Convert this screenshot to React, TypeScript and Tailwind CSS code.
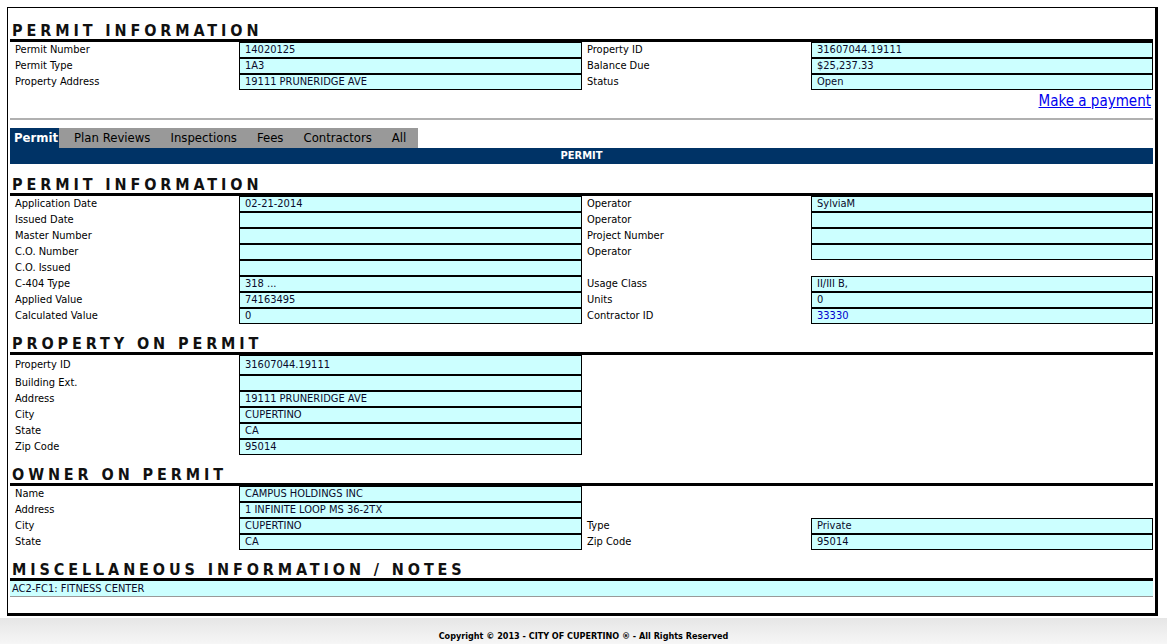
import React from "react";

const FONT = '"DejaVu Sans Condensed", "Liberation Sans", sans-serif';

type Cell = { label?: string; value?: string; cyan?: boolean; link?: boolean };

function Heading({ text, h }: { text: string; h: string }) {
  return (
    <div className={`${h} flex items-end border-b-[3px] border-black pl-[2px]`}>
      <span className="text-[16px] font-bold tracking-[3.9px] leading-[16px] text-[#111]">{text}</span>
    </div>
  );
}

function Row({ left, right, h = "h-[16px]" }: { left: Cell; right?: Cell; h?: string }) {
  const val = (c: Cell | undefined) =>
    c && c.cyan ? (
      <div className="border border-black bg-[#ccffff] pl-[5px] flex items-center overflow-hidden whitespace-nowrap">
        <span className={c.link ? "text-[#0000cc]" : "text-[#0a0a2a]"}>{c.value}</span>
      </div>
    ) : (
      <div />
    );
  return (
    <div className={`grid grid-cols-[229px_343px_229px_342px] ${h} text-[11px] leading-[14px]`}>
      <div className="pl-[5px] flex items-center text-black">{left.label}</div>
      {val(left)}
      <div className="pl-[5px] flex items-center text-black">{right?.label}</div>
      {val(right)}
    </div>
  );
}

export default function App() {
  return (
    <div className="min-h-[644px] w-[1167px] bg-white flex flex-col" style={{ fontFamily: FONT }}>
      <div className="ml-[7px] mt-[7px] w-[1151px] h-[609px] border-l border-t border-r-[3px] border-b-[3px] border-black px-[2px]">
        <Heading text="PERMIT INFORMATION" h="h-[34px]" />
        <Row left={{ label: "Permit Number", value: "14020125", cyan: true }} right={{ label: "Property ID", value: "31607044.19111", cyan: true }} />
        <Row left={{ label: "Permit Type", value: "1A3", cyan: true }} right={{ label: "Balance Due", value: "$25,237.33", cyan: true }} />
        <Row left={{ label: "Property Address", value: "19111 PRUNERIDGE AVE", cyan: true }} right={{ label: "Status", value: "Open", cyan: true }} />
        <div className="flex justify-end pr-[2px] pt-[2px] h-[22px]">
          <a href="#" className="text-[15px] leading-[18px] text-[#0000ee] underline">Make a payment</a>
        </div>
        <div className="mt-[6px] h-[2px] border-t-2 border-[#b0b0b0]" />
        <div className="mt-[8px] flex h-[20px] text-[13px] leading-[20px]">
          <div className="bg-[#003366] text-white font-bold pl-[4px] pr-[1px]">Permit</div>
          <div className="bg-[#999999] text-black flex gap-[20px] pl-[15px] pr-[12px]">
            <span>Plan Reviews</span>
            <span>Inspections</span>
            <span>Fees</span>
            <span>Contractors</span>
            <span>All</span>
          </div>
        </div>
        <div className="h-[16px] bg-[#003366] text-white font-bold text-[11px] leading-[16px] text-center">PERMIT</div>
        <Heading text="PERMIT INFORMATION" h="h-[32px]" />
        <Row left={{ label: "Application Date", value: "02-21-2014", cyan: true }} right={{ label: "Operator", value: "SylviaM", cyan: true }} />
        <Row left={{ label: "Issued Date", value: "", cyan: true }} right={{ label: "Operator", value: "", cyan: true }} />
        <Row left={{ label: "Master Number", value: "", cyan: true }} right={{ label: "Project Number", value: "", cyan: true }} />
        <Row left={{ label: "C.O. Number", value: "", cyan: true }} right={{ label: "Operator", value: "", cyan: true }} />
        <Row left={{ label: "C.O. Issued", value: "", cyan: true }} />
        <Row left={{ label: "C-404 Type", value: "318 ...", cyan: true }} right={{ label: "Usage Class", value: "II/III B,", cyan: true }} />
        <Row left={{ label: "Applied Value", value: "74163495", cyan: true }} right={{ label: "Units", value: "0", cyan: true }} />
        <Row left={{ label: "Calculated Value", value: "0", cyan: true }} right={{ label: "Contractor ID", value: "33330", cyan: true, link: true }} />
        <Heading text="PROPERTY ON PERMIT" h="h-[31px]" />
        <Row h="h-[20px]" left={{ label: "Property ID", value: "31607044.19111", cyan: true }} />
        <Row left={{ label: "Building Ext.", value: "", cyan: true }} />
        <Row left={{ label: "Address", value: "19111 PRUNERIDGE AVE", cyan: true }} />
        <Row left={{ label: "City", value: "CUPERTINO", cyan: true }} />
        <Row left={{ label: "State", value: "CA", cyan: true }} />
        <Row left={{ label: "Zip Code", value: "95014", cyan: true }} />
        <Heading text="OWNER ON PERMIT" h="h-[31px]" />
        <Row left={{ label: "Name", value: "CAMPUS HOLDINGS INC", cyan: true }} />
        <Row left={{ label: "Address", value: "1 INFINITE LOOP MS 36-2TX", cyan: true }} />
        <Row left={{ label: "City", value: "CUPERTINO", cyan: true }} right={{ label: "Type", value: "Private", cyan: true }} />
        <Row left={{ label: "State", value: "CA", cyan: true }} right={{ label: "Zip Code", value: "95014", cyan: true }} />
        <Heading text="MISCELLANEOUS INFORMATION / NOTES" h="h-[31px]" />
        <div className="h-[16px] bg-[#ccffff] border-b border-[#999] pl-[2px] text-[11px] leading-[15px] text-[#0a0a2a]">AC2-FC1: FITNESS CENTER</div>
      </div>
      <div className="mt-[2px] flex-1 bg-gradient-to-b from-[#e6e6e6] to-[#f6f6f6] flex items-end justify-center pb-[1px]">
        <span className="text-[9px] font-bold leading-[13px] text-black">Copyright © 2013 - CITY OF CUPERTINO ® - All Rights Reserved</span>
      </div>
    </div>
  );
}
